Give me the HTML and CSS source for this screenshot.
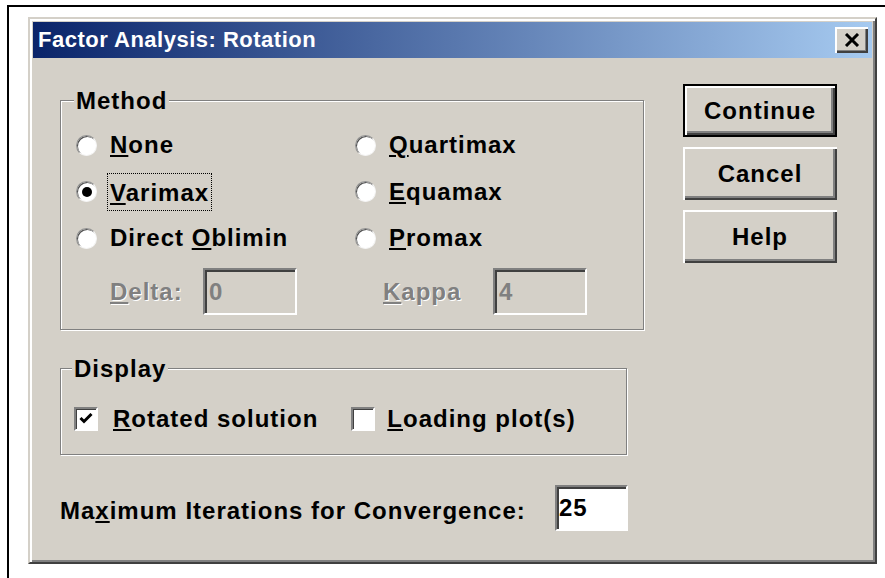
FILE: index.html
```html
<!DOCTYPE html>
<html lang="en">
<head>
  <meta charset="UTF-8">
  <title>Factor Analysis: Rotation</title>
  <link rel="stylesheet" href="styles.css">
</head>
<body>

  <div class="pagina">
    <div class="dialogo">

      <div class="barra-titulo">
        <span class="titulo">Factor Analysis: Rotation</span>
        <button class="fechar">
          <svg width="16" height="14" viewBox="0 0 16 14">
            <path d="M2 1 L14 13 M14 1 L2 13" stroke="#000" stroke-width="3" fill="none"/>
          </svg>
        </button>
      </div>

      <div class="conteudo">
        <div class="principal">

          <!-- grupo Method -->
          <div class="grupo grupo-metodo">
            <div class="grupo-titulo">Method</div>
            <div class="opcoes">
              <label class="opcao"><span class="radio"></span><span><u>N</u>one</span></label>
              <label class="opcao"><span class="radio"></span><span><u>Q</u>uartimax</span></label>
              <label class="opcao"><span class="radio marcado"></span><span class="foco"><u>V</u>arimax</span></label>
              <label class="opcao"><span class="radio"></span><span><u>E</u>quamax</span></label>
              <label class="opcao"><span class="radio"></span><span>Direct <u>O</u>blimin</span></label>
              <label class="opcao"><span class="radio"></span><span><u>P</u>romax</span></label>
              <div class="parametro delta">
                <span class="rotulo desativado"><u>D</u>elta:</span>
                <span class="campo campo-desativado">0</span>
              </div>
              <div class="parametro kappa">
                <span class="rotulo desativado"><u>K</u>appa</span>
                <span class="campo campo-desativado">4</span>
              </div>
            </div>
          </div>

          <!-- grupo Display -->
          <div class="grupo grupo-exibir">
            <div class="grupo-titulo">Display</div>
            <div class="caixas">
              <label class="caixa rotacionada">
                <span class="check">
                  <svg width="14" height="12" viewBox="0 0 14 12">
                    <polyline points="1.5,5 5,8.5 12.5,1" stroke="#000" stroke-width="3" fill="none"/>
                  </svg>
                </span>
                <span><u>R</u>otated solution</span>
              </label>
              <label class="caixa carregamento">
                <span class="check"></span>
                <span><u>L</u>oading plot(s)</span>
              </label>
            </div>
          </div>

          <div class="linha-iteracoes">
            <span class="rotulo-iteracoes">Ma<u>x</u>imum Iterations for Convergence:</span>
            <span class="campo campo-branco">25</span>
          </div>
        </div>

        <div class="botoes">
          <button class="botao padrao">Continue</button>
          <button class="botao">Cancel</button>
          <button class="botao">Help</button>
        </div>
      </div>

    </div>
  </div>

</body>
</html>
```

FILE: styles.css
```css
body {
  margin: 0;
  background-color: #fff;
  font-family: "Liberation Sans", Arial, sans-serif;
}

.pagina {
  margin: 5px 0 0 7px;
  height: 573px;
  box-sizing: border-box;
  border-top: 2px solid #000;
  border-left: 2px solid #000;
  padding: 10px 0 0 19px;
}

.dialogo {
  width: 849px;
  height: 547px;
  box-sizing: border-box;
  background-color: #d4d0c8;
  border: 2px solid;
  border-color: #d4d0c8 #404040 #404040 #d4d0c8;
  box-shadow: inset 2px 2px #fff, inset -2px -2px #808080;
  padding: 3px;
  display: flex;
  flex-direction: column;
}

.barra-titulo {
  height: 36px;
  flex: none;
  display: flex;
  align-items: center;
  justify-content: space-between;
  padding: 0 4px 0 5px;
  background: linear-gradient(to right, #0a246a, #a6caf0);
}

.titulo {
  color: #fff;
  font-size: 22px;
  font-weight: bold;
  letter-spacing: 0.5px;
  line-height: 36px;
}

.fechar {
  width: 33px;
  height: 26px;
  padding: 0;
  border: none;
  background-color: #d4d0c8;
  box-shadow: inset 2px 2px #fff, inset -2px -2px #404040, inset -3px -3px #808080;
  display: flex;
  align-items: center;
  justify-content: center;
}

.conteudo {
  flex: 1;
  display: flex;
  gap: 39px;
  padding: 26px 35px 0 27px;
  font-size: 24px;
  font-weight: bold;
  letter-spacing: 1px;
  color: #000;
}

.principal {
  width: 584px;
}

u {
  text-decoration-thickness: 2px;
  text-underline-offset: 2px;
}

/* caixas de grupo */
.grupo {
  border: 1px solid #808080;
  box-shadow: inset 1px 1px #fff, 1px 1px #fff;
}

.grupo-titulo {
  width: fit-content;
  margin: -12px 0 0 -2px;
  padding: 0 2px;
  line-height: 24px;
  background-color: #d4d0c8;
}

.grupo-metodo {
  margin-top: 16px;
  padding: 0 15px 14px;
}

.opcoes {
  margin-top: 9px;
  display: grid;
  grid-template-columns: 279px 1fr;
  grid-template-rows: 46.5px 46.5px 46.5px 53.5px;
}

.opcao {
  display: flex;
  align-items: center;
  line-height: 26px;
}

.radio {
  width: 21px;
  height: 21px;
  box-sizing: border-box;
  margin-right: 13px;
  border-radius: 50%;
  background-color: #fff;
  border: 1.5px solid;
  border-color: #909090 #f4f4f4 #f4f4f4 #909090;
  box-shadow: inset 1px 1px #505050;
  display: flex;
  align-items: center;
  justify-content: center;
}

.radio.marcado::after {
  content: "";
  width: 10px;
  height: 10px;
  border-radius: 50%;
  background-color: #000;
}

.foco {
  padding: 6px 2px 4px;
  margin: 0 -3px;
  border: 1px dotted #000;
}

.parametro {
  align-self: end;
  height: 47px;
  display: flex;
  align-items: center;
}

.delta {
  padding-left: 34px;
}

.delta .rotulo {
  width: 93px;
}

.kappa {
  padding-left: 28px;
}

.kappa .rotulo {
  width: 110px;
}

.desativado {
  color: #808080;
  text-shadow: 1px 1px #fff;
}

.campo {
  box-sizing: border-box;
  height: 47px;
  border: 2px solid;
  border-color: #808080 #fff #fff #808080;
  box-shadow: inset 2px 2px #404040;
  padding-left: 4px;
  display: flex;
  align-items: center;
}

.campo-desativado {
  width: 94px;
  color: #808080;
  background-color: #d4d0c8;
}

.campo-branco {
  width: 73px;
  height: 46px;
  padding-left: 2px;
  background-color: #fff;
}

.grupo-exibir {
  width: 567px;
  box-sizing: border-box;
  margin-top: 38px;
  padding: 0 13px 20px;
}

.caixas {
  margin-top: 23px;
  height: 30px;
  display: flex;
  align-items: center;
}

.caixa {
  display: flex;
  align-items: center;
}

.check {
  width: 24px;
  height: 24px;
  box-sizing: border-box;
  background-color: #fff;
  border: 2px solid;
  border-color: #808080 #fff #fff #808080;
  box-shadow: inset 1px 1px #404040;
  display: flex;
  align-items: center;
  justify-content: center;
}

.rotacionada .check {
  margin-right: 15px;
}

.carregamento {
  margin-left: 33px;
}

.carregamento .check {
  margin-right: 12px;
}

.linha-iteracoes {
  margin-top: 30px;
  display: flex;
  align-items: center;
}

.rotulo-iteracoes {
  width: 495px;
  line-height: 24px;
  margin-top: 5px;
}

/* botoes */
.botoes {
  width: 154px;
  display: flex;
  flex-direction: column;
  gap: 10px;
}

.botao {
  height: 53px;
  box-sizing: border-box;
  padding: 0;
  border: none;
  background-color: #d4d0c8;
  box-shadow: inset 2px 2px #fff, inset -2px -2px #404040, inset -4px -4px #808080;
  font-family: "Liberation Sans", Arial, sans-serif;
  font-size: 24px;
  font-weight: bold;
  letter-spacing: 1px;
  color: #000;
}

.botao.padrao {
  border: 2px solid #000;
}
```
